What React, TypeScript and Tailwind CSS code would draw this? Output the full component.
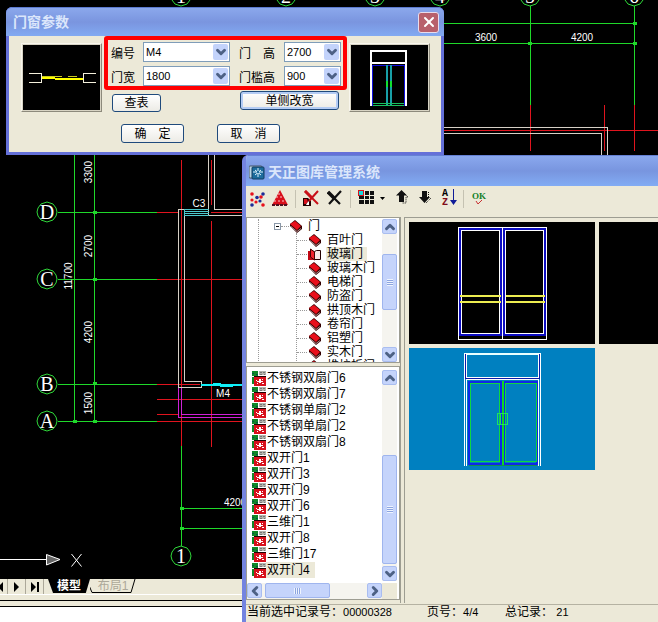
import type { ReactNode } from "react";
import { ChevronDown, ChevronLeft, ChevronRight, ChevronUp, X } from "lucide-react";

const treeItems = [
  "百叶门",
  "玻璃门",
  "玻璃木门",
  "电梯门",
  "防盗门",
  "拱顶木门",
  "卷帘门",
  "铝塑门",
  "实木门",
  "推拉折门",
];

const records = [
  "不锈钢双扇门6",
  "不锈钢双扇门7",
  "不锈钢单扇门2",
  "不锈钢单扇门2",
  "不锈钢双扇门8",
  "双开门1",
  "双开门3",
  "双开门9",
  "双开门6",
  "三维门1",
  "双开门8",
  "三维门17",
  "双开门4",
];

const topAxes = [
  { x: 181, label: "1" },
  { x: 286, label: "2" },
  { x: 375, label: "3" },
  { x: 440, label: "4" },
  { x: 530, label: "5" },
  { x: 634, label: "6" },
];

const sideAxes = [
  { y: 212, label: "D" },
  { y: 279, label: "C" },
  { y: 384, label: "B" },
  { y: 421, label: "A" },
];

const sideDims = [
  { x: 92, y: 172, text: "3300" },
  { x: 92, y: 246, text: "2700" },
  { x: 72, y: 276, text: "11700" },
  { x: 92, y: 332, text: "4200" },
  { x: 92, y: 403, text: "1500" },
];

function AxisBubble({ x, y, label }: { x: number; y: number; label: string }) {
  return (
    <g transform={`translate(${x} ${y})`}>
      <path d="M0-10 6-8 9-4 10 0 9 4 6 8 0 10-6 8-9 4-10 0-9-4-6-8Z" fill="#000" stroke="#2fd83a" />
      <text y="7" textAnchor="middle" fill="#fff" fontSize="20" fontFamily="'Liberation Serif', serif">
        {label}
      </text>
    </g>
  );
}

function FloorPlan() {
  return (
    <svg className="absolute inset-0 h-full w-full" fill="none" shapeRendering="crispEdges">
      {/* dimension lines */}
      <g stroke="#1fd82a">
        <path d="M74.5 150V421M94.5 150V421" />
        <path d="M58 212.5H157M58 279.5H157M58 384.5H157M58 421.5H157" />
        <path d="M181.5 446V546M181.5 508.5H260M181.5 528.5H260" />
        <path d="M440 23.5H637M440 43.5H637M530.5 6V105M634.5 6V105" />
      </g>
      <g fill="#1fd82a">
        <path d="M93 211h4v3h-4zM93 278h4v3h-4zM93 382h4v3h-4zM93 420h4v3h-4zM73 420h4v3h-4z" />
        <path d="M180 507h4v3h-4zM180 527h4v3h-4zM528 42h4v3h-4zM633 42h4v3h-4zM633 22h4v3h-4z" />
      </g>

      {/* axes */}
      <g stroke="#e0141e">
        <path d="M181.5 160V446M211.5 160V205M211.5 221V447" />
        <path d="M157 212.5H178M211 212.5H260M157 279.5H260M157 384.5H200M157 399.5H260M157 414.5H179M157 421.5H260" />
        <path d="M530.5 105V151M634.5 105V151M604.5 105V151M440 130.5H658" />
      </g>

      {/* walls */}
      <g stroke="#d6d0c6">
        <path d="M208.5 150V215M214.5 150V209.5H260M260 215.5H184.5V381.5H201.5V387.5H178.5V209.5H185" />
        <path d="M440 127.5H607.5V158M440 133.5H601.5V158" />
      </g>
      <path d="M184 209.5H209M184 211.5H209M184 213.5H209M184 215.5H209M184.5 209V216" stroke="#4cc8cc" />
      <path d="M201 384h10l3-1h4l5 1h19v2h-6l-6 1h-6l-8-1h-15Z" fill="#10f0f8" />
      <path d="M178.5 388V417.5H260M181.5 388V414.5H260" stroke="#d020d8" />

      {/* UCS icon */}
      <g stroke="#fff" shapeRendering="auto">
        <path d="M0 559.5H46" />
        <path d="M46.5 554.5V565L60 559.5Z" fill="#666" />
        <path d="M71.5 554 81.500 566.500M81.500 554 71.500 566.500" />
      </g>

      <g shapeRendering="auto">
        {topAxes.map((a) => (
          <AxisBubble key={a.label} x={a.x} y={-4} label={a.label} />
        ))}
        {sideAxes.map((a) => (
          <AxisBubble key={a.label} x={47} y={a.y} label={a.label} />
        ))}
        <AxisBubble x={181} y={556} label="1" />
      </g>

      <g fill="#fff" fontSize="10" fontFamily="'Liberation Sans', sans-serif" textAnchor="middle">
        <text x="486" y="41">3600</text>
        <text x="582" y="41">4200</text>
        <text x="199" y="207">C3</text>
        <text x="223" y="397">M4</text>
        <text x="235" y="506">4200</text>
        {sideDims.map((d) => (
          <text key={d.text + d.y} transform={`translate(${d.x} ${d.y}) rotate(-90)`}>
            {d.text}
          </text>
        ))}
      </g>
    </svg>
  );
}

function SheetTabs() {
  return (
    <div className="flex h-[15px] overflow-hidden bg-[#ece9d8] text-black">
      <button aria-label="上一页" className="w-2 overflow-hidden border-r border-[#aca899]">
        <svg width="4" height="10" className="-ml-px">
          <path d="M4 0V10L-1 5Z" />
        </svg>
      </button>
      <button aria-label="下一页" className="flex w-[18px] items-center justify-center border-r border-[#aca899]">
        <svg width="5" height="10">
          <path d="M0 0V10L5 5Z" />
        </svg>
      </button>
      <button aria-label="末页" className="flex w-[18px] items-center justify-center border-r border-[#aca899]">
        <svg width="8" height="10">
          <path d="M0 0V10L5 5ZM6 0H8V10H6Z" />
        </svg>
      </button>
      <button className="ml-1 h-[14px] w-[42px] bg-black text-xs leading-[13px] font-bold text-white [clip-path:polygon(0_0,100%_0,90%_100%,12%_100%)]">
        模型
      </button>
      <button className="relative h-[14px] w-[46px] text-xs leading-[13px] text-[#aca899]">
        <svg className="absolute inset-0 h-full w-full" fill="none" stroke="#000">
          <path d="M-2 4 2 13.500H41L45 0" />
        </svg>
        布局1
      </button>
    </div>
  );
}

function Combo({ id, value }: { id: string; value: string }) {
  return (
    <div className="relative h-5 border border-[#7f9db9] bg-white">
      <select
        id={id}
        defaultValue={value}
        className="block h-full w-full appearance-none bg-transparent pl-[2px] text-[11px] leading-4 text-black outline-none"
      >
        <option>{value}</option>
      </select>
      <span className="pointer-events-none absolute inset-y-px right-px flex w-[15px] items-center justify-center rounded-xs bg-[#c3d3fb]">
        <ChevronDown className="h-3.5 w-3.5 text-[#4d6185]" strokeWidth={5} />
      </span>
    </div>
  );
}

function XpButton({ className, children }: { className: string; children: ReactNode }) {
  return (
    <button
      className={`flex items-center justify-center rounded-[3px] border border-[#1f4a7c] bg-linear-to-b from-white to-[#ecebe5] text-xs leading-none whitespace-pre ${className}`}
    >
      {children}
    </button>
  );
}

function Preview({ children }: { children: ReactNode }) {
  return (
    <div className="mt-[7px] h-[69px] w-[81px] shrink-0 border border-t-[#f8f6ee] border-r-[#8d8a7c] border-b-[#8d8a7c] border-l-[#f8f6ee] bg-[#d8d4c4] p-px">
      <svg className="block h-full w-full bg-black" viewBox="0 0 77 65" fill="none" shapeRendering="crispEdges">
        {children}
      </svg>
    </div>
  );
}

function DoorParamsDialog() {
  return (
    <section className="absolute top-[7px] left-[6px] w-[438px] rounded-t-md border-x-[3px] border-b-[3px] border-[#6470d8] bg-[#ece9d8] text-black">
      <header className="-mx-[3px] flex h-[29px] items-center justify-between rounded-t-md border-t border-[#5c7ad0] bg-linear-to-b from-[#8ba8ec] via-[#7a95df] to-[#82aaf2] pr-[5px] pl-[7px]">
        <h1 className="text-sm font-bold text-[#dbe6fb]">门窗参数</h1>
        <button aria-label="关闭" className="flex h-[21px] w-[21px] items-center justify-center rounded-[3px] border border-[#e8dcec] bg-[#b8606c] text-white">
          <X className="h-4 w-4" strokeWidth={3} />
        </button>
      </header>

      <div className="flex gap-[2px] pl-3">
        <Preview>
          <path d="M6 28.500H18.500V37.500H6M73 28.500H60.500V37.500H73" stroke="#f4f0dc" />
          <path d="M19 31.500H39M45 31.500H54" stroke="#c8c820" />
          <path d="M19 33H32M32 34H60" stroke="#ffff00" strokeWidth="2" />
        </Preview>

        <div className="w-[243px]">
          <div className="grid h-[54px] grid-cols-[32px_87px_54px_57px] content-start items-center gap-y-1 rounded-[3px] border-4 border-[#ff0000] pt-[2px] pl-[3px] text-xs">
            <label htmlFor="code" className="pt-[3px]">编号</label>
            <Combo id="code" value="M4" />
            <label htmlFor="height" className="pt-[3px] pl-[9px] whitespace-pre">门　高</label>
            <Combo id="height" value="2700" />
            <label htmlFor="width" className="pt-[3px]">门宽</label>
            <Combo id="width" value="1800" />
            <label htmlFor="sill" className="pt-[3px] pl-[9px]">门槛高</label>
            <Combo id="sill" value="900" />
          </div>
          <div className="flex items-end justify-between px-2 pt-px">
            <XpButton className="h-[18px] w-[49px]">查表</XpButton>
            <XpButton className="mb-[2px] h-[19px] w-[99px] shadow-[inset_0_0_0_2px_#b4ccf4]">单侧改宽</XpButton>
          </div>
        </div>

        <Preview>
          <path d="M19 6H56M20 6V61M55 6V61M19 18H56" stroke="#fff" strokeWidth="2" />
          <path d="M21.500 61V20.500H53.500V61" stroke="#1010e0" />
          <path d="M36 20V61M40 20V61" stroke="#18a0a8" strokeWidth="2" />
          <path d="M22 58.500H53M22 60.500H53" stroke="#18c060" />
          <path d="M35 36h2v6h-2zM39 36h2v6h-2z" fill="#10e030" />
        </Preview>
      </div>

      <div className="flex gap-[33px] pt-3 pb-[9px] pl-28">
        <XpButton className="h-[19px] w-[63px]">确　定</XpButton>
        <XpButton className="h-[19px] w-[63px]">取　消</XpButton>
      </div>
    </section>
  );
}

function BookIcon() {
  return (
    <svg width="14" height="13" viewBox="0 0 14 13" className="shrink-0">
      <path d="M1 4 6 0 13 6V9L8 13 1 6Z" fill="#300" />
      <path d="M1 4 6 1 12 6 8 10Z" fill="#e8101c" />
      <path d="M2 6.500 8 11.500 12 8.500" fill="none" stroke="#e8c8c8" strokeWidth="0.7" />
    </svg>
  );
}

function OpenBookIcon() {
  return (
    <svg width="14" height="13" viewBox="0 0 14 13" className="shrink-0">
      <path d="M0 3H2V1L6 3V12H0Z" fill="#c00814" />
      <path d="M6.500 3.500 8.500 2.500H12.500V11.500H6.500Z" fill="#f8e4e4" stroke="#200" />
      <path d="M2.500 1V9L6.500 12V4Z" fill="#f0202c" stroke="#400" />
    </svg>
  );
}

function RecordIcon() {
  return (
    <svg width="14" height="15" viewBox="0 0 14 15" className="shrink-0" shapeRendering="crispEdges">
      <path d="M0 0H6V5H0ZM0 6H2V13H0Z" fill="#108828" />
      <path d="M7 0H14V4H7Z" fill="#b4b4ac" />
      <path d="M8 1H10M8 3H10M11 1H13M12 3H13" stroke="#777" />
      <path d="M2 5H14V15H2Z" fill="#d8101c" />
      <path d="M2 5.500H14" stroke="#200" />
      <path d="M4 9H5V10H4ZM10 8H11V9H10ZM7 8H9V10H7ZM5 12H6V13H5ZM10 12H12V13H10ZM5 10H11V11H5ZM7 11H9V12H7Z" fill="#fff" />
      <path d="M0 2H2M4 3H6" stroke="#054" />
    </svg>
  );
}

const scrollButton =
  "flex h-[15px] w-[15px] shrink-0 items-center justify-center rounded-xs border border-[#a9bdf0] bg-[#c5d4fb] text-[#4d6185]";

function VerticalScroll({ before, thumb }: { before: string; thumb: string }) {
  return (
    <div className="flex w-[15px] shrink-0 flex-col bg-[#f5f4ef]">
      <button aria-label="向上" className={scrollButton}>
        <ChevronUp className="h-3.5 w-3.5 shrink-0" strokeWidth={5} />
      </button>
      <div className={before} />
      <div className={`flex items-center justify-center rounded-xs border border-[#9fb5ee] bg-[#c5d4fb] ${thumb}`}>
        <div className="h-[7px] w-[6px] bg-[repeating-linear-gradient(#eef4fe_0_1px,#8ca4e0_1px_2px)]" />
      </div>
      <button aria-label="向下" className={`mt-auto ${scrollButton}`}>
        <ChevronDown className="h-3.5 w-3.5 shrink-0" strokeWidth={5} />
      </button>
    </div>
  );
}

function CategoryTree() {
  return (
    <div className="flex h-[146px] shrink-0 border border-[#9d9d92] bg-white pt-px pr-[2px]">
      <div className="flex-1 overflow-hidden pl-[11px]">
        <div className="border-l border-dotted border-[#999] pl-[15px]">
          <div className="flex h-[14px] items-center">
            <span className="flex h-[7px] w-[7px] items-center justify-center border border-[#8a98a8]">
              <span className="h-px w-[3px] bg-black" />
            </span>
            <span className="w-2 border-t border-dotted border-[#999]" />
            <BookIcon />
            <span className="ml-[5px]">门</span>
          </div>
          <ul className="ml-[22px] border-l border-dotted border-[#999]">
            {treeItems.map((item) => (
              <li key={item} className="flex h-[14px] items-center">
                <span className="mr-px w-[10px] border-t border-dotted border-[#999]" />
                {item === "玻璃门" ? <OpenBookIcon /> : <BookIcon />}
                <span
                  className={`ml-1 px-px leading-[14px] whitespace-nowrap ${item === "玻璃门" ? "bg-[#ece9d8] pr-1" : ""}`}
                >
                  {item}
                </span>
              </li>
            ))}
          </ul>
        </div>
      </div>
      <VerticalScroll before="h-[20px]" thumb="h-[56px]" />
    </div>
  );
}

function RecordList() {
  return (
    <div className="flex min-h-0 flex-1 flex-col border border-[#9d9d92] bg-white pt-[3px] pr-[2px]">
      <div className="flex min-h-0 flex-1">
        <ul className="flex-1 overflow-hidden pl-[5px]">
          {records.map((name, i) => (
            <li key={i} className="flex h-4 items-center">
              <RecordIcon />
              <span
                className={`pl-px leading-4 whitespace-nowrap ${i === records.length - 1 ? "bg-[#ece9d8] pr-[5px]" : ""}`}
              >
                {name}
              </span>
            </li>
          ))}
        </ul>
        <VerticalScroll before="h-[70px]" thumb="h-[109px]" />
      </div>
      <div className="mt-[2px] flex h-[16px] bg-[#ece9d8] pr-[15px]">
        <div className="flex flex-1 bg-[#f5f4ef]">
          <button aria-label="向左" className={scrollButton}>
            <ChevronLeft className="h-3.5 w-3.5 shrink-0" strokeWidth={5} />
          </button>
          <div className="ml-[3px] flex h-[15px] w-[65px] items-center justify-center rounded-xs border border-[#9fb5ee] bg-[#c5d4fb]">
            <div className="h-[6px] w-[7px] bg-[repeating-linear-gradient(90deg,#eef4fe_0_1px,#8ca4e0_1px_2px)]" />
          </div>
          <button aria-label="向右" className={`ml-auto ${scrollButton}`}>
            <ChevronRight className="h-3.5 w-3.5 shrink-0" strokeWidth={5} />
          </button>
        </div>
      </div>
    </div>
  );
}

function Divider({ className }: { className: string }) {
  return <span className={`h-[18px] w-px bg-[#c5c2b2] ${className}`} />;
}

function Toolbar() {
  return (
    <div className="flex h-[31px] shrink-0 items-start pt-1 pl-[4px]">
      <button aria-label="合并检索" className="mt-[2px] shrink-0">
        <svg width="15" height="15" viewBox="0 0 15 15">
          <g fill="#e8101c">
            <circle cx="2" cy="2" r="1.800" />
            <circle cx="11" cy="5" r="1.800" />
            <circle cx="2" cy="8" r="1.600" />
            <circle cx="6" cy="10" r="1.600" />
            <circle cx="13" cy="13" r="1.800" />
          </g>
          <g fill="#1c2c98">
            <circle cx="7" cy="5.500" r="1.800" />
            <circle cx="13" cy="2" r="1.800" />
            <circle cx="10" cy="9" r="1.600" />
            <circle cx="2" cy="13" r="1.800" />
          </g>
        </svg>
      </button>
      <button aria-label="展开树" className="ml-[7px] shrink-0">
        <svg width="16" height="16" viewBox="0 0 16 16">
          <path d="M8 0 16 15H0Z" fill="#d8101c" />
          <path d="M4 7H12M2 11H14M6 4H10" stroke="#ffc8c8" strokeDasharray="2 2" />
          <path d="M0 15H16" stroke="#501020" strokeWidth="2" strokeDasharray="3 1" />
        </svg>
      </button>
      <Divider className="ml-[7px]" />
      <button aria-label="删除类别" className="ml-[7px] shrink-0">
        <svg width="16" height="16" viewBox="0 0 16 16" fill="none">
          <path d="M0 8H5L8 11V16H0Z" fill="#200" />
          <path d="M1 9H4L5 12 3 14H1Z" fill="#d8101c" />
          <path d="M4 13 6 11V15H3Z" fill="#fff" />
          <path d="M2 1 15 14M15 1 6 11" stroke="#c81018" strokeWidth="2" />
          <path d="M2 1 9 8" stroke="#c81018" strokeWidth="3" />
        </svg>
      </button>
      <button aria-label="删除" className="ml-2 shrink-0">
        <svg width="15" height="16" viewBox="0 0 15 16" fill="none">
          <path d="M1 2 13 14M14 1 2 14" stroke="#111" strokeWidth="2.200" />
          <path d="M1 2 8 9" stroke="#111" strokeWidth="3.500" />
        </svg>
      </button>
      <Divider className="ml-2" />
      <button aria-label="布局" className="ml-[7px] flex shrink-0 items-center">
        <svg width="17" height="16" viewBox="0 0 17 16" shapeRendering="crispEdges">
          <path d="M1 1H16V14H1Z" fill="#111" />
          <path d="M6.500 1V14M11.500 1V14M1 5.500H16M1 9.500H16" stroke="#ece9d8" />
          <path d="M0 0H6V6H0Z" fill="#d8101c" />
          <path d="M1 1H5V5H1Z" fill="#18d8e0" />
        </svg>
        <svg width="5" height="3" className="ml-[5px]">
          <path d="M0 0H5L2.500 3Z" />
        </svg>
      </button>
      <button aria-label="上移" className="ml-[11px] shrink-0">
        <svg width="13" height="14" viewBox="0 0 13 14">
          <path d="M8 3 12 7H10V13H6" fill="none" stroke="#111" strokeDasharray="1 1" />
          <path d="M5.500 0 11 5.500H8V12H3V5.500H0Z" fill="#111" />
        </svg>
      </button>
      <button aria-label="下移" className="ml-[10px] shrink-0">
        <svg width="13" height="14" viewBox="0 0 13 14">
          <path d="M3 1H8V7H11L5.500 13 0 7H3Z" fill="#111" />
          <path d="M9.500 2V7M12 8 7 13" stroke="#111" strokeDasharray="1 1" />
        </svg>
      </button>
      <button aria-label="排序" className="-mt-px ml-[10px] flex shrink-0">
        <span className="flex flex-col font-['Liberation_Mono',monospace] text-[10px] leading-[9px] font-bold">
          <span>A</span>
          <span className="text-[#800c18]">Z</span>
        </span>
        <svg width="7" height="16" className="ml-[2px]">
          <path d="M3 0H4V11H7L3.500 16 0 11H3Z" fill="#101c98" />
        </svg>
      </button>
      <Divider className="ml-[6px]" />
      <button
        aria-label="OK"
        className="mt-[2px] ml-2 flex shrink-0 flex-col items-center font-['Liberation_Serif',serif] text-[9px] leading-2 font-bold text-[#108028]"
      >
        OK
        <svg width="8" height="6" fill="none">
          <path d="M1 1 3 4 7 0" stroke="#c83030" />
        </svg>
      </button>
    </div>
  );
}

function Thumbnail({ children, selected }: { children?: ReactNode; selected?: boolean }) {
  return (
    <svg
      className={`block h-[122px] w-[186px] ${selected ? "bg-[#0080c0]" : "bg-black"}`}
      viewBox="0 0 186 122"
      fill="none"
      shapeRendering="crispEdges"
    >
      {children}
    </svg>
  );
}

function LibraryWindow() {
  return (
    <section className="absolute top-[155px] right-0 bottom-0 left-[242px] flex flex-col overflow-hidden rounded-tl-md border-l-4 border-[#7484e0] bg-[#ece9d8] text-xs text-black">
      <header className="-ml-1 flex h-[31px] shrink-0 items-center gap-[3px] border-t border-[#6480d4] bg-linear-to-b from-[#8aa8ee] via-[#7895df] to-[#82acf4] pt-[2px] pl-[7px]">
        <svg width="16" height="15" viewBox="0 0 16 15" className="shrink-0">
          <rect x="0" y="1" width="13" height="12" rx="1" fill="#b8d4e4" stroke="#456" />
          <rect x="3" y="2" width="12" height="12" rx="1" fill="#1c6c9c" stroke="#123c60" />
          <path d="M4 7H14M9 3V12M6 5 12 10M12 5 6 10" stroke="#e0f4ff" />
          <path d="M8 6H10V8H8Z" fill="#1c6c9c" />
        </svg>
        <h2 className="text-sm font-bold text-[#dbe6fb]">天正图库管理系统</h2>
      </header>

      <Toolbar />

      <div className="flex min-h-0 flex-1">
        <div className="flex w-[155px] shrink-0 flex-col gap-[3px] border-r border-[#9d9d92] pb-[3px]">
          <CategoryTree />
          <RecordList />
        </div>
        <div className="ml-[3px] min-w-0 flex-1 overflow-hidden border-t border-l border-[#9d9d92] pt-1 pl-1">
          <div className="grid grid-cols-[186px_186px] gap-1">
            <Thumbnail>
              <path d="M49.500 5.500H137.500V117.500H49.500ZM93.500 5V117" stroke="#fff" />
              <path d="M51 7H92V113H51ZM95 7H136V113H95Z" stroke="#0c0cc0" strokeWidth="2" />
              <path d="M52.500 8.500H90.500V111.500H52.500ZM96.500 8.500H134.500V111.500H96.500Z" stroke="#fff" />
              <path d="M51 74H92M97 74H136M51 80H92M97 80H136" stroke="#ecec50" strokeWidth="2" />
            </Thumbnail>
            <Thumbnail />
            <Thumbnail selected>
              <path d="M56 6H132" stroke="#e8ffff" strokeWidth="2" />
              <path d="M55.500 5V118M57.500 5V118M129.500 5V118M131.500 5V118M57 29.500H130M57 31.500H130" stroke="#fff" />
              <path d="M56.500 6V31M130.500 6V31M57 30.500H130" stroke="#0c1ca8" />
              <path d="M60 34H92V116H60ZM95 34H128V116H95Z" stroke="#1028e8" strokeWidth="2" />
              <path d="M61.500 35.500H90.500V113.500H61.500ZM96.500 35.500H127.500V113.500H96.500Z" stroke="#10d840" />
              <path d="M60 117.500H128" stroke="#109050" />
              <path d="M93.500 33V117" stroke="#10d820" strokeWidth="2" />
              <path d="M88.500 65.500H98.500V76.500H88.500ZM91 65.500V76" stroke="#20e060" />
            </Thumbnail>
          </div>
        </div>
      </div>

      <footer className="mt-px flex h-[18px] shrink-0 border-t border-[#b5b2a2] pl-px leading-[15px] whitespace-nowrap">
        <span className="w-[180px]">
          当前选中记录号：<span className="text-[11px]">00000328</span>
        </span>
        <span className="w-[78px]">
          页号：<span className="text-[11px]">4/4</span>
        </span>
        <span>
          总记录： <span className="text-[11px]">21</span>
        </span>
      </footer>
    </section>
  );
}

export default function App() {
  return (
    <main className="relative flex h-screen flex-col overflow-hidden bg-black font-['Liberation_Sans','Noto_Sans_CJK_SC',sans-serif]">
      <div className="relative flex-1 overflow-hidden">
        <FloorPlan />
      </div>
      <SheetTabs />
      <div className="h-[6px] border-t border-white bg-[#ece9d8]" />
      <div className="h-[7px] border-y border-black bg-[#ece9d8]" />
      <div className="h-[15px] bg-white" />

      <DoorParamsDialog />
      <LibraryWindow />
    </main>
  );
}
